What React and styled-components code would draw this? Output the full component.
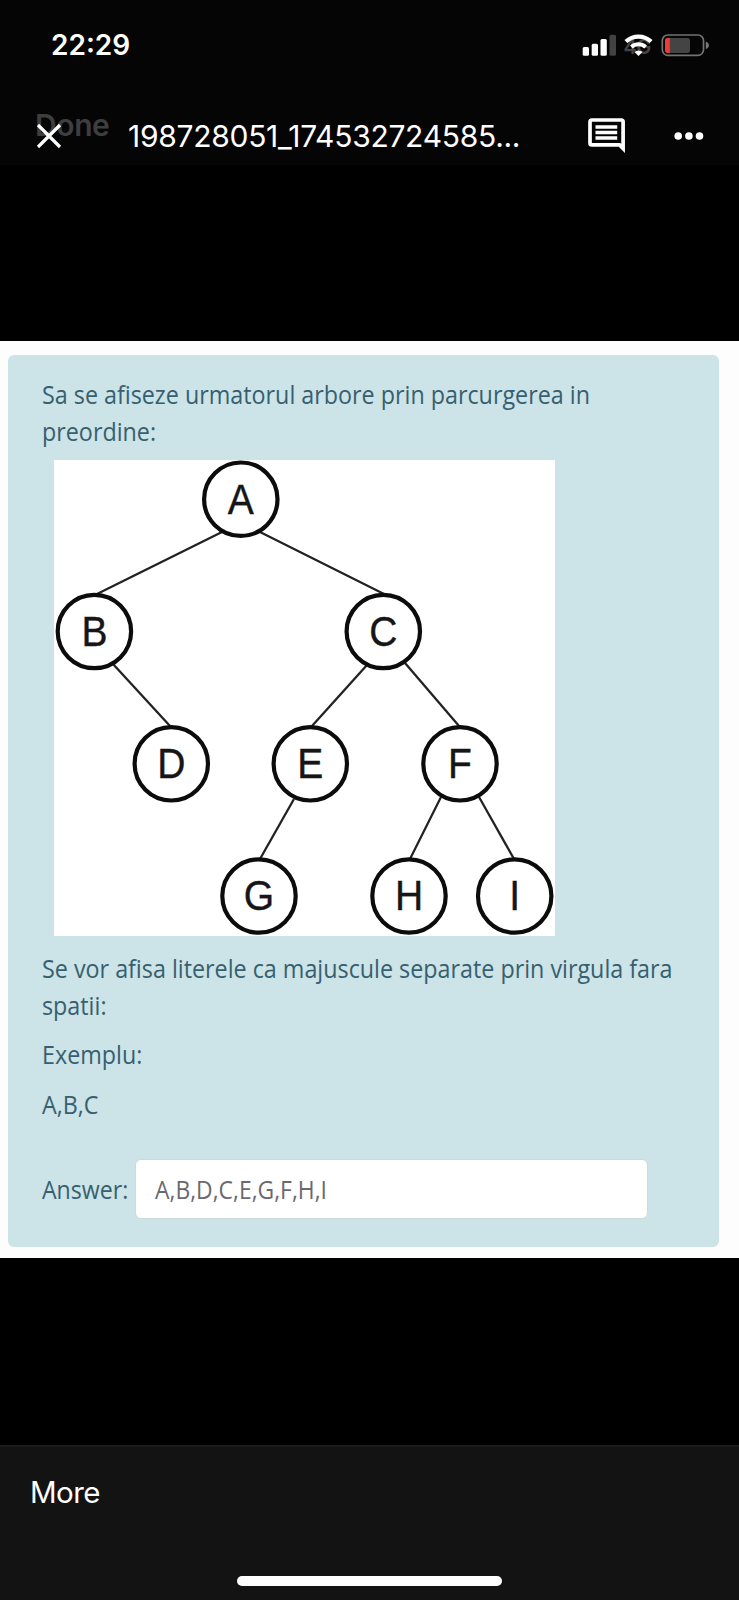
import React from 'react';
import styled, { createGlobalStyle } from 'styled-components';

const GlobalStyle = createGlobalStyle`
  * { box-sizing: border-box; }
  body { margin: 0; background: #000; }
`;

const Screen = styled.div`
  width: 739px;
  height: 1600px;
  display: flex;
  flex-direction: column;
  background: #000;
  overflow: hidden;
  font-family: Inter, 'Liberation Sans', sans-serif;
  color: #fff;
`;

const Header = styled.header`
  height: 165px;
  margin-bottom: 176px;
  flex: none;
  background: #050505;
`;

const StatusBar = styled.div`
  height: 90px;
  padding: 0 29px 0 51px;
  display: flex;
  align-items: center;
  justify-content: space-between;
`;

const Clock = styled.div`
  font-size: 28px;
  font-weight: 600;
  line-height: 34px;
`;

const StatusIcons = styled.div`
  display: flex;
  align-items: center;
`;

const TitleBar = styled.div`
  height: 75px;
  padding: 0 35px 0 36px;
  display: flex;
  align-items: center;
`;

const CloseButton = styled.div`
  position: relative;
  width: 92px;
  height: 75px;
  display: flex;
  align-items: center;
`;

const GhostLabel = styled.span`
  position: absolute;
  left: -1px;
  top: 17px;
  font-size: 30px;
  line-height: 36px;
  font-weight: 600;
  letter-spacing: -0.4px;
  color: #3e3e3e;
`;

const CloseIcon = styled.svg`
  position: relative;
  top: 8px;
`;

const FileName = styled.div`
  flex: 1;
  font-size: 30px;
  line-height: 40px;
  padding-top: 16px;
  letter-spacing: -0.28px;
  white-space: nowrap;
`;

const Actions = styled.div`
  display: flex;
  align-items: center;
  gap: 49px;
  padding-top: 16px;
`;

const Sheet = styled.main`
  height: 917px;
  flex: none;
  padding: 14px 20.5px 0 7.5px;
  background: #fefdfe;
`;

const Question = styled.section`
  height: 892px;
  padding: 21px 34px 0;
  border-radius: 6px;
  background: #cce3e7;
  color: #36606f;
  font-family: 'Open Sans', 'Noto Sans', sans-serif;
  font-size: 25px;
  line-height: 37px;
`;

const Line = styled.div`
  white-space: nowrap;
  transform: scaleX(${(p) => p.$condense || 0.932});
  transform-origin: left center;
  margin-top: ${(p) => p.$gap || 0}px;
`;

const Tree = styled.svg`
  display: block;
  margin: 10px 0 14px 12.5px;
  background: #fff;
`;

const AnswerRow = styled.label`
  display: flex;
  align-items: center;
  margin-top: 36px;
`;

const AnswerLabel = styled.span`
  width: 94px;
`;

const AnswerBox = styled.div`
  width: 513px;
  height: 60px;
  margin-left: -0.5px;
  padding: 0 19px;
  display: flex;
  align-items: center;
  border: 1px solid #cbdadf;
  border-radius: 6px;
  background: #fff;
  color: #6b6970;
`;

const Footer = styled.footer`
  height: 155px;
  margin-top: auto;
  flex: none;
  padding: 25px 30px 14px;
  display: flex;
  flex-direction: column;
  justify-content: space-between;
  border-top: 2px solid #1b1b1b;
  background: #131313;
`;

const MoreButton = styled.div`
  font-size: 29.5px;
  line-height: 40px;
  letter-spacing: -0.6px;
`;

const HomeIndicator = styled.div`
  align-self: center;
  width: 265px;
  height: 10px;
  border-radius: 5px;
  background: #fff;
`;

const NODES = [
  ['A', 240.8, 499.2], ['B', 94.4, 631.5], ['C', 383.3, 631.5],
  ['D', 171.3, 763.8], ['E', 310.3, 763.8], ['F', 460, 763.8],
  ['G', 259, 896], ['H', 409, 896], ['I', 514.7, 896],
];

const EDGES = [
  [222, 532, 97, 594], [260, 532, 384, 594], [113, 664, 170, 726],
  [367, 665, 312, 726], [405, 663, 459, 726], [294, 799, 260, 859],
  [441, 797, 410, 859], [479, 797, 514, 859],
];

function TreeDiagram() {
  return (
    <Tree width="501" height="476" viewBox="54 460 501 476">
      {EDGES.map((e) => (
        <line key={e.join()} x1={e[0]} y1={e[1]} x2={e[2]} y2={e[3]} stroke="#222" strokeWidth="2.3" />
      ))}
      {NODES.map(([name, x, y]) => (
        <g key={name}>
          <circle cx={x} cy={y} r="36.7" fill="#fff" stroke="#0c0c0c" strokeWidth="4.2" />
          <text
            transform={`translate(${x} ${y + 14.3}) scale(0.93 1)`}
            textAnchor="middle"
            fontFamily="'Liberation Sans', Arial, sans-serif"
            fontSize="42"
            fill="#161616"
            stroke="#161616"
            strokeWidth="0.4"
          >
            {name}
          </text>
        </g>
      ))}
    </Tree>
  );
}

function StatusGlyphs() {
  return (
    <StatusIcons>
      <svg width="128" height="26" viewBox="582 31 128 26">
        <rect x="582.7" y="46" width="6.3" height="8.7" rx="1.5" fill="#fff" />
        <rect x="591.7" y="42.7" width="6.3" height="12" rx="1.5" fill="#fff" />
        <rect x="600.5" y="38" width="6.3" height="16.7" rx="1.5" fill="#fff" />
        <rect x="609.5" y="33.8" width="6.5" height="20.9" rx="1.5" fill="#424242" />
        <text x="623.5" y="53" fontFamily="Inter, sans-serif" fontSize="20" fontWeight="600" fill="#444" letterSpacing="-0.5">4G</text>
        <path d="M625.9 40.6a18.2 18.2 0 0 1 25.2 0" fill="none" stroke="#fff" strokeWidth="4.2" />
        <path d="M631.4 46a10.6 10.6 0 0 1 14.2 0" fill="none" stroke="#fff" strokeWidth="4" />
        <path d="M638.5 55l-4-4a5.8 5.8 0 0 1 8 0z" fill="#fff" />
        <rect x="662.3" y="34" width="41.2" height="20.4" rx="5.6" fill="none" stroke="#727272" strokeWidth="1.7" />
        <rect x="665" y="36.9" width="25" height="15" rx="2.6" fill="#444" />
        <path d="M669.8 36.9h-1.8a3 3 0 0 0-3 3v9a3 3 0 0 0 3 3h1.8z" fill="#ef3b35" />
        <path d="M705.8 40.4c4.2 1.6 4.2 6 0 7.6z" fill="#777" />
      </svg>
    </StatusIcons>
  );
}

export default function App() {
  return (
    <>
      <GlobalStyle />
      <Screen>
        <Header>
          <StatusBar>
            <Clock>22:29</Clock>
            <StatusGlyphs />
          </StatusBar>
          <TitleBar>
            <CloseButton>
              <GhostLabel>Done</GhostLabel>
              <CloseIcon width="26" height="26" viewBox="0 0 26 26">
                <path d="M2 2l22 22M24 2L2 24" stroke="#fff" strokeWidth="3.2" />
              </CloseIcon>
            </CloseButton>
            <FileName>198728051_174532724585...</FileName>
            <Actions>
              <svg width="37" height="36" viewBox="0 0 37 36">
                <path d="M4 2h29.5a1.6 1.6 0 0 1 1.6 1.6V30.5l-3.6-3.6H4a2 2 0 0 1-2-2V4a2 2 0 0 1 2-2z" fill="none" stroke="#fff" strokeWidth="3.7" />
                <path d="M7.5 9h21.7M7.5 14.6h21.7M7.5 20h21.7" stroke="#fff" strokeWidth="3.5" />
              </svg>
              <svg width="30" height="8" viewBox="0 0 30 8">
                <circle cx="4.2" cy="4" r="3.8" fill="#fff" />
                <circle cx="14.9" cy="4" r="3.8" fill="#fff" />
                <circle cx="25.5" cy="4" r="3.8" fill="#fff" />
              </svg>
            </Actions>
          </TitleBar>
        </Header>
        <Sheet>
          <Question>
            <Line>Sa se afiseze urmatorul arbore prin parcurgerea in</Line>
            <Line>preordine:</Line>
            <TreeDiagram />
            <Line>Se vor afisa literele ca majuscule separate prin virgula fara</Line>
            <Line>spatii:</Line>
            <Line $gap={12}>Exemplu:</Line>
            <Line $gap={13}>A,B,C</Line>
            <AnswerRow>
              <AnswerLabel>
                <Line $condense={0.925}>Answer:</Line>
              </AnswerLabel>
              <AnswerBox>
                <Line $condense={0.915}>A,B,D,C,E,G,F,H,I</Line>
              </AnswerBox>
            </AnswerRow>
          </Question>
        </Sheet>
        <Footer>
          <MoreButton>More</MoreButton>
          <HomeIndicator />
        </Footer>
      </Screen>
    </>
  );
}
